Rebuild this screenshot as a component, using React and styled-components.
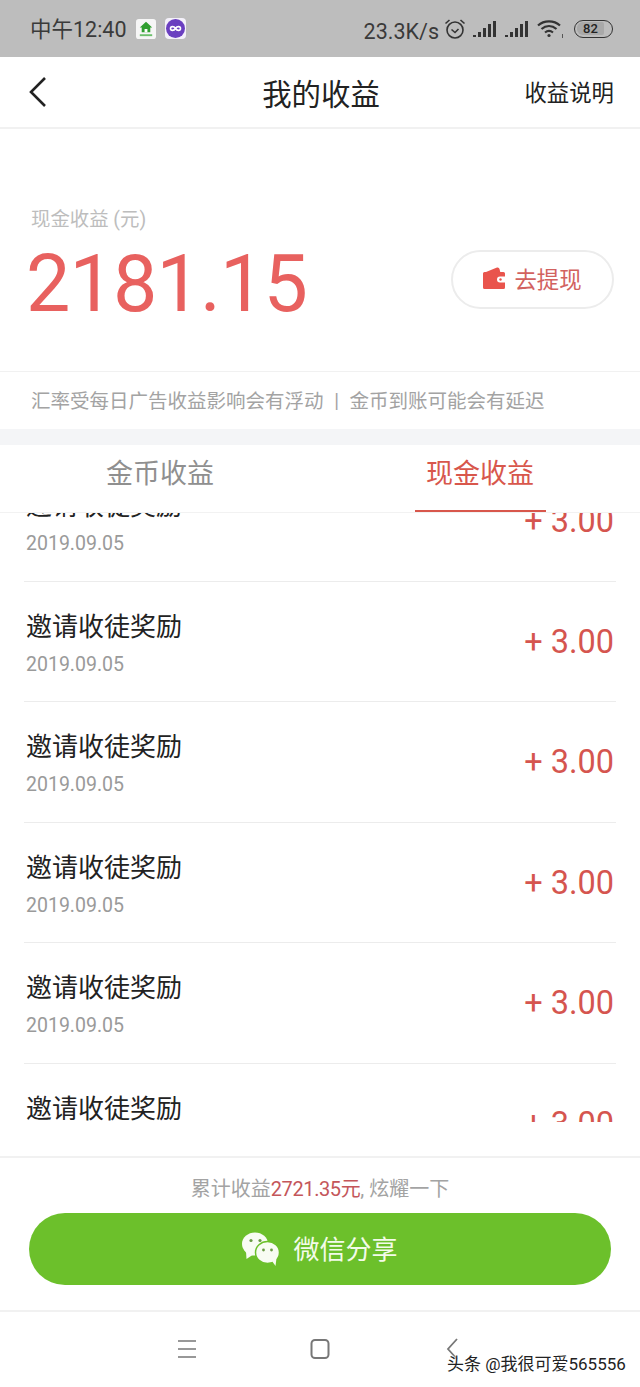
import styled, { createGlobalStyle } from "styled-components";

const red = "#e8615f";
const listRed = "#d5554f";

const GlobalStyle = createGlobalStyle`
  * {
    margin: 0;
    padding: 0;
    box-sizing: border-box;
  }

  body {
    font-family: Roboto, "Noto Sans CJK SC", sans-serif;
    background: #ffffff;
  }
`;

const Screen = styled.div`
  position: relative;
  width: 640px;
  height: 1387px;
  display: flex;
  flex-direction: column;
  overflow: hidden;
  background: #ffffff;
`;

const StatusBar = styled.div`
  height: 57px;
  flex: none;
  display: flex;
  align-items: center;
  justify-content: space-between;
  padding: 0 27px 0 30px;
  background: #bdbdbd;
  color: #3a3a3a;
  font-size: 21.5px;
`;

const StatusGroup = styled.div`
  display: flex;
  align-items: center;
  gap: ${(props) => props.gap || 8}px;
`;

const StatusTime = styled.span`
  padding-bottom: 2px;
`;

const StatusSpeed = styled.span`
  padding-top: 5px;
  height: 30px;
  margin-right: -2px;
`;

const Battery = styled.div`
  width: 39px;
  height: 18px;
  border: 1.5px solid #333333;
  border-radius: 9px;
  padding: 1.5px;
  margin-left: 3px;
`;

const BatteryFill = styled.div`
  height: 100%;
  width: 82%;
  border-radius: 6px 2px 2px 6px;
  background: #a9a9a9;
  display: flex;
  align-items: center;
  justify-content: center;
  font-size: 13px;
  font-weight: 500;
  line-height: 1;
  color: #222222;
`;

const NavBar = styled.header`
  height: 72px;
  flex: none;
  display: grid;
  grid-template-columns: 1fr auto 1fr;
  align-items: center;
  padding: 0 26px 0 28px;
  border-bottom: 2px solid #f1f1f1;
`;

const NavTitle = styled.h1`
  font-size: 29.4px;
  font-weight: 400;
  color: #222222;
  padding-bottom: 1px;
`;

const NavLink = styled.span`
  justify-self: end;
  font-size: 22.4px;
  color: #222222;
  padding-bottom: 3px;
`;

const Hero = styled.section`
  height: 243px;
  flex: none;
  display: flex;
  align-items: flex-start;
  justify-content: space-between;
  padding: 79px 26px 0;
  border-bottom: 1px solid #f1f1f1;
`;

const HeroLabel = styled.div`
  font-size: 19.4px;
  line-height: 24px;
  color: #bdbdbd;
  padding-left: 5px;
`;

const HeroAmount = styled.div`
  font-size: 79px;
  line-height: 94px;
  letter-spacing: -0.9px;
  color: ${red};
  margin-top: 5px;
`;

const WithdrawButton = styled.button`
  width: 163px;
  height: 59px;
  margin-top: 42px;
  padding-bottom: 3px;
  display: flex;
  align-items: center;
  justify-content: center;
  gap: 9px;
  background: #ffffff;
  border: 2px solid #ececec;
  border-radius: 30px;
  font-family: inherit;
  font-size: 22.4px;
  color: #d2625f;
`;

const Notice = styled.p`
  height: 57px;
  flex: none;
  display: flex;
  align-items: center;
  padding: 0 0 2px 31px;
  font-size: 19.5px;
  word-spacing: 0.5px;
  color: #a3a3a3;
  white-space: pre;
`;

const Band = styled.div`
  height: 16px;
  flex: none;
  background: #f4f5f7;
`;

const Tabs = styled.nav`
  height: 68px;
  flex: none;
  display: grid;
  grid-template-columns: 1fr 1fr;
  border-bottom: 1px solid #f2f2f2;
`;

const Tab = styled.div`
  display: flex;
  justify-content: center;
  position: relative;
  padding-top: 11px;
  font-size: 27px;
  line-height: 36px;
  color: ${(props) => (props.active ? "#d8574c" : "#8f8f8f")};

  &::after {
    content: "";
    display: ${(props) => (props.active ? "block" : "none")};
    position: absolute;
    left: 95px;
    bottom: 0;
    width: 131px;
    height: 2px;
    background: #d8574c;
  }
`;

const ListClip = styled.div`
  height: 609px;
  flex: none;
  overflow: hidden;
`;

const List = styled.ul`
  list-style: none;
  margin: -52px 24px 0;
`;

const Row = styled.li`
  height: 120.5px;
  display: flex;
  justify-content: space-between;
  padding: 0 2px;
  border-bottom: 1px solid #ececec;
`;

const RowText = styled.div`
  padding-top: 28px;
`;

const RowTitle = styled.div`
  font-size: 26px;
  line-height: 34px;
  color: #222222;
`;

const RowDate = styled.div`
  font-size: 19.5px;
  line-height: 24px;
  margin-top: 9px;
  color: #9a9a9a;
`;

const RowAmount = styled.div`
  font-size: 32.5px;
  line-height: 40px;
  margin-top: 40px;
  color: ${listRed};
  white-space: pre;
`;

const Footer = styled.footer`
  flex: 1;
  display: flex;
  flex-direction: column;
  align-items: center;
  margin-top: 34px;
  border-top: 2px solid #f1f1f1;
`;

const Total = styled.div`
  font-size: 20px;
  line-height: 24px;
  margin-top: 19px;
  color: #a3a3a3;
`;

const TotalValue = styled.span`
  color: #c4565a;
  letter-spacing: -0.4px;
`;

const ShareButton = styled.button`
  width: 582px;
  height: 72px;
  margin-top: 12px;
  padding-bottom: 3px;
  display: flex;
  align-items: center;
  justify-content: center;
  gap: 13px;
  border: none;
  border-radius: 36px;
  background: #6cc02b;
  font-family: inherit;
  font-size: 26px;
  color: #f3fbe9;
`;

const SystemBar = styled.div`
  height: 77px;
  flex: none;
  display: grid;
  grid-template-columns: repeat(3, 133px);
  justify-content: center;
  align-items: center;
  padding: 0 0 1px;
  border-top: 2px solid #f1f1f1;
`;

const SystemKey = styled.div`
  display: flex;
  justify-content: center;
`;

const Watermark = styled.div`
  position: absolute;
  left: 447px;
  top: 1353px;
  font-size: 17px;
  line-height: 22px;
  color: #222222;
  text-shadow: 0 0 2px #ffffff, 0 0 2px #ffffff;
`;

function HomeAppIcon() {
  return (
    <svg width="20" height="20" viewBox="0 0 21 21">
      <rect width="21" height="21" rx="3" fill="#f6f6f6" />
      <path d="M10.5 3 L17 9 H15 V14 H6 V9 H4 Z" fill="#2f9e2f" />
      <rect x="9" y="10.5" width="3" height="3.5" fill="#ffffff" />
      <rect x="4" y="16" width="13" height="2" fill="#6cbf6c" />
    </svg>
  );
}

function LoopAppIcon() {
  return (
    <svg width="21" height="21" viewBox="0 0 21 21">
      <rect width="21" height="21" rx="4" fill="#f4f1fa" />
      <circle cx="10.5" cy="10.5" r="9.5" fill="#6a3fc0" />
      <path
        d="M10.5 10.5 C9 8 5.5 8 5.5 10.5 C5.5 13 9 13 10.5 10.5 C12 8 15.5 8 15.5 10.5 C15.5 13 12 13 10.5 10.5 Z"
        fill="none"
        stroke="#ffffff"
        strokeWidth="1.6"
      />
    </svg>
  );
}

function AlarmIcon() {
  return (
    <svg width="22" height="22" viewBox="0 0 22 22" fill="none" stroke="#333333" strokeWidth="1.6">
      <circle cx="11" cy="12" r="8" />
      <path d="M7.5 11.5 L11 14.5 L14.5 11" />
      <path d="M1.5 5.5 L5.5 2 M20.5 5.5 L16.5 2" />
    </svg>
  );
}

function SignalIcon() {
  return (
    <svg width="25" height="18" viewBox="0 0 25 18" fill="#333333">
      <rect x="0" y="15" width="3" height="2" />
      <rect x="5" y="12" width="3" height="5" />
      <rect x="10" y="8" width="3" height="9" />
      <rect x="15" y="4" width="3" height="13" />
      <rect x="20" y="1" width="3" height="16" />
    </svg>
  );
}

function WifiIcon() {
  return (
    <svg width="27" height="20" viewBox="0 0 27 20" fill="none" stroke="#333333" strokeWidth="2.2">
      <path d="M1 6.5 C7 1 17 1 23 6.5" />
      <path d="M4.5 10 C9 6 15 6 19.5 10" />
      <path d="M8 13.5 C10.5 11.5 13.5 11.5 16 13.5" />
      <circle cx="12" cy="16.5" r="1.6" fill="#333333" stroke="none" />
      <rect x="25" y="15" width="1" height="4" fill="#555555" stroke="none" />
    </svg>
  );
}

function BackIcon() {
  return (
    <svg width="20" height="32" viewBox="0 0 20 32" fill="none" stroke="#222222" strokeWidth="2.6">
      <path d="M17 2 L3 16 L17 30" />
    </svg>
  );
}

function WalletIcon() {
  return (
    <svg width="22" height="22" viewBox="0 0 22 22">
      <path d="M3 5 L14 0.5 Q16 0 16.5 2 L17.5 6 H3 Z" fill="#e9544c" />
      <path
        d="M0 6.5 Q0 5 1.5 5 H20.5 Q22 5 22 6.5 V9.5 H17 Q14 9.5 14 12.5 Q14 15.5 17 15.5 H22 V20.5 Q22 22 20.5 22 H1.5 Q0 22 0 20.5 Z"
        fill="#e9544c"
      />
      <circle cx="17.5" cy="12.5" r="1.2" fill="#e9544c" />
    </svg>
  );
}

function WechatIcon() {
  return (
    <svg width="38" height="36" viewBox="0 -2 38 36">
      <ellipse cx="13" cy="12" rx="13" ry="11.5" fill="#f8fcf3" />
      <path d="M4 19 L4.5 27 L12 22 Z" fill="#f8fcf3" />
      <circle cx="9" cy="8.5" r="1.6" fill="#6a9a45" />
      <circle cx="18" cy="8.5" r="1.6" fill="#6a9a45" />
      <ellipse cx="25.5" cy="20.5" rx="12" ry="11" fill="#f8fcf3" stroke="#6cc02b" strokeWidth="1.5" />
      <path d="M30 29 L33.5 34 L34.5 26 Z" fill="#f8fcf3" />
      <circle cx="21.5" cy="18" r="1.4" fill="#6a9a45" />
      <circle cx="29.5" cy="18" r="1.4" fill="#6a9a45" />
    </svg>
  );
}

function MenuKeyIcon() {
  return (
    <svg width="20" height="20" viewBox="0 0 20 20" stroke="#777777" strokeWidth="1.6">
      <path d="M1 2 H19 M1 10 H19 M1 18 H19" />
    </svg>
  );
}

function HomeKeyIcon() {
  return (
    <svg width="20" height="22" viewBox="0 0 20 22" fill="none" stroke="#777777" strokeWidth="2">
      <rect x="1.5" y="2" width="17" height="18" rx="3.5" />
    </svg>
  );
}

function BackKeyIcon() {
  return (
    <svg width="14" height="24" viewBox="0 0 14 24" fill="none" stroke="#777777" strokeWidth="1.8">
      <path d="M11 2 L2 12 L11 22" />
    </svg>
  );
}

const rows = [0, 1, 2, 3, 4, 5];

export default function App() {
  return (
    <Screen>
      <GlobalStyle />
      <StatusBar>
        <StatusGroup gap={9}>
          <StatusTime>中午12:40</StatusTime>
          <HomeAppIcon />
          <LoopAppIcon />
        </StatusGroup>
        <StatusGroup gap={7}>
          <StatusSpeed>23.3K/s</StatusSpeed>
          <AlarmIcon />
          <SignalIcon />
          <SignalIcon />
          <WifiIcon />
          <Battery>
            <BatteryFill>82</BatteryFill>
          </Battery>
        </StatusGroup>
      </StatusBar>

      <NavBar>
        <BackIcon />
        <NavTitle>我的收益</NavTitle>
        <NavLink>收益说明</NavLink>
      </NavBar>

      <Hero>
        <div>
          <HeroLabel>现金收益 (元)</HeroLabel>
          <HeroAmount>2181.15</HeroAmount>
        </div>
        <WithdrawButton>
          <WalletIcon />
          去提现
        </WithdrawButton>
      </Hero>

      <Notice>汇率受每日广告收益影响会有浮动  |  金币到账可能会有延迟</Notice>
      <Band />

      <Tabs>
        <Tab>金币收益</Tab>
        <Tab active>现金收益</Tab>
      </Tabs>

      <ListClip>
        <List>
          {rows.map((row) => (
            <Row key={row}>
              <RowText>
                <RowTitle>邀请收徒奖励</RowTitle>
                <RowDate>2019.09.05</RowDate>
              </RowText>
              <RowAmount>+ 3.00</RowAmount>
            </Row>
          ))}
        </List>
      </ListClip>

      <Footer>
        <Total>
          累计收益<TotalValue>2721.35元</TotalValue>, 炫耀一下
        </Total>
        <ShareButton>
          <WechatIcon />
          微信分享
        </ShareButton>
      </Footer>

      <SystemBar>
        <SystemKey>
          <MenuKeyIcon />
        </SystemKey>
        <SystemKey>
          <HomeKeyIcon />
        </SystemKey>
        <SystemKey>
          <BackKeyIcon />
        </SystemKey>
      </SystemBar>

      <Watermark>头条 @我很可爱565556</Watermark>
    </Screen>
  );
}
